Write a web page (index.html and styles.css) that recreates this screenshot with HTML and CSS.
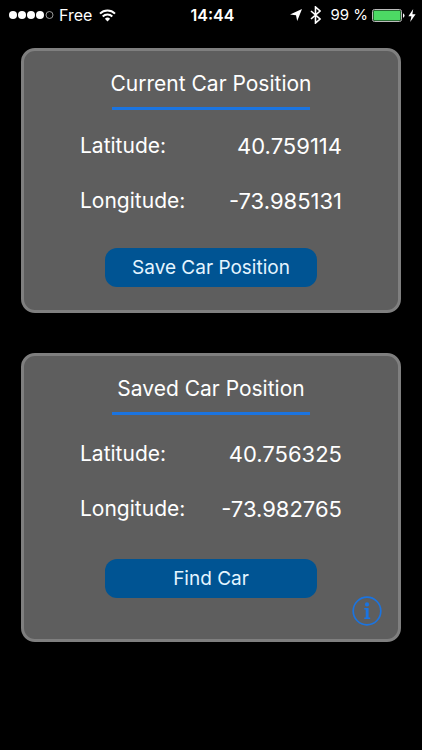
FILE: index.html
```html
<!DOCTYPE html>
<html lang="en">
<head>
    <meta charset="UTF-8">
    <meta name="viewport" content="width=device-width, initial-scale=1.0">
    <title>Car Position</title>
    <link rel="stylesheet" href="styles.css">
</head>
<body>
    <header class="status-bar">
        <div class="status-left">
            <svg class="signal" width="46" height="10" viewBox="0 0 46 10">
                <g fill="#fff">
                    <circle cx="4" cy="5" r="4"/>
                    <circle cx="13" cy="5" r="4"/>
                    <circle cx="22" cy="5" r="4"/>
                    <circle cx="31" cy="5" r="4"/>
                </g>
                <circle cx="40.5" cy="5" r="3.5" fill="none" stroke="#aaa" stroke-width="0.9"/>
            </svg>
            <span class="carrier">Free</span>
            <svg width="17" height="13" viewBox="0 0 17 13">
                <g fill="none" stroke="#fff" stroke-width="2">
                    <path d="M1 4.6a10.6 10.6 0 0 1 15 0"/>
                    <path d="M3.7 7.5a6.8 6.8 0 0 1 9.6 0"/>
                </g>
                <path d="M8.5 12.4L5.9 9.7a3.7 3.7 0 0 1 5.2 0z" fill="#fff"/>
            </svg>
        </div>
        <time class="clock">14:44</time>
        <div class="status-right">
            <svg class="location" width="12" height="12" viewBox="0 0 12 12">
                <path d="M12 0L7.2 12L6 6.2L0 5.4z" fill="#fff"/>
            </svg>
            <svg class="bluetooth" width="11" height="18" viewBox="0 0 11 18">
                <path d="M1 5L10 13L5.5 17V1L10 5L1 13" fill="none" stroke="#fff" stroke-width="1.6"/>
            </svg>
            <span class="percent">99 %</span>
            <svg width="33" height="13" viewBox="0 0 33 13">
                <rect x="0.5" y="0.5" width="29" height="12" rx="2" fill="none" stroke="#bbb"/>
                <rect x="1.5" y="1.5" width="27" height="10" rx="1" fill="#4cd964"/>
                <path d="M31 4.2a2.5 2.5 0 0 1 0 4.6z" fill="#fff"/>
            </svg>
            <svg class="bolt" width="8" height="13" viewBox="0 0 8 13">
                <path d="M5.2 0L0.4 7.2H3.4L2.2 13L7.6 5.2H4.4z" fill="#fff"/>
            </svg>
        </div>
    </header>

    <main class="cards">
        <section class="card">
            <h2 class="card-title">Current Car Position</h2>
            <dl class="position">
                <div class="row">
                    <dt>Latitude:</dt>
                    <dd>40.759114</dd>
                </div>
                <div class="row">
                    <dt>Longitude:</dt>
                    <dd>-73.985131</dd>
                </div>
            </dl>
            <button type="button" class="action">Save Car Position</button>
        </section>

        <section class="card card-saved">
            <h2 class="card-title">Saved Car Position</h2>
            <dl class="position">
                <div class="row">
                    <dt>Latitude:</dt>
                    <dd>40.756325</dd>
                </div>
                <div class="row">
                    <dt>Longitude:</dt>
                    <dd>-73.982765</dd>
                </div>
            </dl>
            <button type="button" class="action">Find Car</button>
            <button type="button" class="info" aria-label="Info">
                <svg width="30" height="30" viewBox="0 0 30 30">
                    <circle cx="15" cy="15" r="13.8" fill="none" stroke="#1b74e0" stroke-width="1.7"/>
                    <circle cx="15" cy="8.4" r="2.1" fill="#1b74e0"/>
                    <path d="M12.2 12H16.6V21.4H18.2V23H12.2V21.4H13.7V13.6H12.2z" fill="#1b74e0"/>
                </svg>
            </button>
        </section>
    </main>
</body>
</html>
```
FILE: styles.css
```css
* {
    box-sizing: border-box;
}
body {
    margin: 0;
    background-color: #000;
    color: #fff;
    font-family: Inter, "Liberation Sans", sans-serif;
}
svg {
    display: block;
}

/* Status bar */
.status-bar {
    display: grid;
    grid-template-columns: 1fr auto 1fr;
    align-items: center;
    height: 30px;
    padding: 0 6px 0 9px;
    font-size: 16px;
    line-height: 20px;
}
.status-left,
.status-right {
    display: flex;
    align-items: center;
}
.status-right {
    justify-content: flex-end;
}
.carrier {
    margin: 0 7px 0 4px;
}
.clock {
    font-weight: 600;
}
.bluetooth {
    margin: 0 9px 0 8px;
}
.percent {
    margin-right: 4px;
    font-size: 15px;
    white-space: nowrap;
}
.bolt {
    margin-left: 3px;
}

/* Cards */
.cards {
    display: flex;
    flex-direction: column;
    gap: 40px;
    padding: 18px 21px;
}
.card {
    position: relative;
    display: flex;
    flex-direction: column;
    align-items: center;
    padding: 19px 56px 23px;
    border: 3px solid #7f7f7f;
    border-radius: 14px;
    background-color: #5e5e5e;
}
.card-title {
    display: flex;
    flex-direction: column;
    align-items: center;
    gap: 9px;
    margin: 0;
    font-size: 21px;
    font-weight: 400;
    line-height: 28px;
}
.card-title::after {
    content: "";
    width: 198px;
    height: 3px;
    background-color: #1b74e0;
}
.position {
    display: flex;
    flex-direction: column;
    gap: 27px;
    width: 100%;
    margin: 22px 0 33px;
    font-size: 21px;
    line-height: 28px;
}
.row {
    display: flex;
    justify-content: space-between;
}
.row dd {
    margin: 0;
    font-size: 22px;
}
.action {
    width: 212px;
    height: 39px;
    padding: 0;
    border: 0;
    border-radius: 12px;
    background-color: #005493;
    color: #e4f5ff;
    font-family: inherit;
    font-size: 19px;
}
.card-saved {
    padding-bottom: 41px;
}
.card-saved .position {
    margin: 25px 0 36px;
}
.info {
    position: absolute;
    right: 16px;
    bottom: 13px;
    padding: 0;
    border: 0;
    background: none;
}
```
